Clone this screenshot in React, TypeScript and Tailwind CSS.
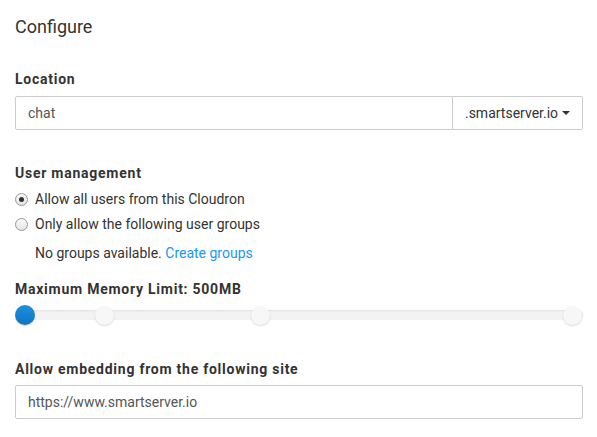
export default function App() {
  const ticks = [25, 105, 261, 573];

  return (
    <div className="min-h-screen bg-white px-[15px] text-[#333] font-['Roboto',sans-serif]">
      {/* Title */}
      <h3 className="pt-[17px] text-[18px] leading-[20px] font-normal">Configure</h3>

      {/* Location */}
      <label className="mt-[32px] block text-[14px] leading-[20px] font-bold tracking-[0.75px]">Location</label>
      <div className="mt-[7px] flex h-[34px] w-[568px]">
        <input
          readOnly
          value="chat"
          className="h-full flex-1 rounded-l-[2px] border border-[#ccc] px-[12px] text-[14px] text-[#555] outline-none font-['Roboto',sans-serif]"
        />
        <button className="flex h-full w-[130px] items-center justify-center gap-[4px] rounded-r-[2px] border border-l-0 border-[#ccc] bg-white text-[14px] text-[#333]">
          .smartserver.io
          <span className="inline-block h-0 w-0 border-x-[4px] border-t-[4px] border-x-transparent border-t-[#333]" />
        </button>
      </div>

      {/* User management */}
      <label className="mt-[33px] block text-[14px] leading-[20px] font-bold tracking-[0.75px]">User management</label>
      <div className="mt-[6px] flex h-[20px] items-center gap-[7px] text-[14px]">
        <span className="flex h-[13px] w-[13px] items-center justify-center rounded-full border border-[#999] bg-gradient-to-b from-[#fafafa] to-[#e4e4e4]">
          <span className="h-[5px] w-[5px] rounded-full bg-[#333]" />
        </span>
        <span>Allow all users from this Cloudron</span>
      </div>
      <div className="mt-[5px] flex h-[20px] items-center gap-[7px] text-[14px]">
        <span className="h-[13px] w-[13px] rounded-full border border-[#999] bg-gradient-to-b from-[#fafafa] to-[#e4e4e4]" />
        <span>Only allow the following user groups</span>
      </div>
      <p className="mt-[9px] pl-[20px] text-[14px] leading-[20px]">
        No groups available. <a className="text-[#2196f3]">Create groups</a>
      </p>

      {/* Memory */}
      <label className="mt-[16px] block text-[14px] leading-[20px] font-bold tracking-[0.75px]">Maximum Memory Limit: 500MB</label>
      <div className="relative mt-[6px] h-[20px] w-[568px]">
        <div className="absolute left-0 right-0 top-[5px] h-[10px] rounded-full bg-[#f3f3f3] shadow-[inset_0_1px_2px_rgba(0,0,0,0.08)]" />
        {ticks.map((x, i) => (
          <span
            key={x}
            className={
              i === 0
                ? "absolute top-0 h-[20px] w-[20px] rounded-full bg-gradient-to-b from-[#1e90de] to-[#0c74c4] shadow-[0_1px_1px_rgba(0,0,0,0.2)]"
                : "absolute top-[1px] h-[19px] w-[19px] rounded-full bg-[#f7f7f7] shadow-[0_1px_2px_rgba(0,0,0,0.15)]"
            }
            style={{ left: x - 15 - 10 }}
          />
        ))}
      </div>

      {/* Embedding */}
      <label className="mt-[34px] block text-[14px] leading-[20px] font-bold tracking-[0.75px]">Allow embedding from the following site</label>
      <input
        readOnly
        value="https://www.smartserver.io"
        className="mt-[6px] block h-[34px] w-[568px] rounded-[2px] border border-[#ccc] px-[12px] text-[14px] text-[#555] outline-none font-['Roboto',sans-serif]"
      />
    </div>
  );
}
